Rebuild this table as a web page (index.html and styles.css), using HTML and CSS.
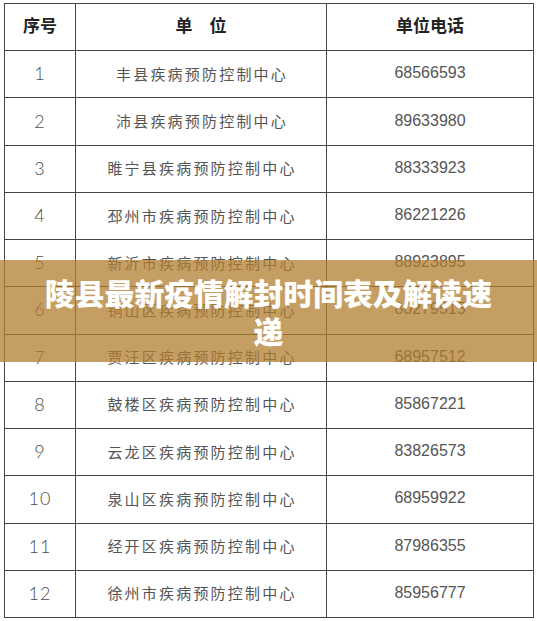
FILE: index.html
```html
<!DOCTYPE html>
<html lang="zh-CN">
<head>
<meta charset="utf-8">
<title>陵县最新疫情解封时间表及解读速递</title>
<link rel="stylesheet" href="styles.css">
</head>
<body>
<div class="page">
  <div class="table">
    <div class="cell head">序号</div>
    <div class="cell head">单　位</div>
    <div class="cell head">单位电话</div>

    <div class="cell num">1</div><div class="cell name">丰县疾病预防控制中心</div><div class="cell tel">68566593</div>
    <div class="cell num">2</div><div class="cell name">沛县疾病预防控制中心</div><div class="cell tel">89633980</div>
    <div class="cell num">3</div><div class="cell name">睢宁县疾病预防控制中心</div><div class="cell tel">88333923</div>
    <div class="cell num">4</div><div class="cell name">邳州市疾病预防控制中心</div><div class="cell tel">86221226</div>
    <div class="cell num">5</div><div class="cell name">新沂市疾病预防控制中心</div><div class="cell tel">88923895</div>
    <div class="cell num">6</div><div class="cell name">铜山区疾病预防控制中心</div><div class="cell tel">80279515</div>
    <div class="cell num">7</div><div class="cell name">贾汪区疾病预防控制中心</div><div class="cell tel">68957512</div>
    <div class="cell num">8</div><div class="cell name">鼓楼区疾病预防控制中心</div><div class="cell tel">85867221</div>
    <div class="cell num">9</div><div class="cell name">云龙区疾病预防控制中心</div><div class="cell tel">83826573</div>
    <div class="cell num">10</div><div class="cell name">泉山区疾病预防控制中心</div><div class="cell tel">68959922</div>
    <div class="cell num">11</div><div class="cell name">经开区疾病预防控制中心</div><div class="cell tel">87986355</div>
    <div class="cell num">12</div><div class="cell name">徐州市疾病预防控制中心</div><div class="cell tel">85956777</div>
  </div>
  <div class="banner">
    <h1 class="title">陵县最新疫情解封时间表及解读速递</h1>
  </div>
</div>
</body>
</html>
```

FILE: styles.css
```css
html, body {
  margin: 0;
  padding: 0;
  background: #ffffff;
}

.page {
  position: relative;
  width: 537px;
  height: 621px;
  padding: 3px 0 0 4px;
  box-sizing: border-box;
}

.table {
  display: grid;
  grid-template-columns: 70px 250px 206px;
  grid-template-rows: repeat(13, 1fr);
  gap: 1px;
  width: 530px;
  height: 615px;
  box-sizing: border-box;
  border: 1px solid #444444;
  background: #444444;
}

.cell {
  background: #ffffff;
  display: flex;
  align-items: center;
  justify-content: center;
  color: #555555;
  padding-bottom: 2px;
}

.head {
  font-family: "Noto Sans CJK SC", sans-serif;
  font-weight: 700;
  font-size: 17px;
  color: #222222;
  padding-bottom: 5px;
}

.num {
  font-family: "Lato", "Liberation Sans", sans-serif;
  font-weight: 300;
  font-size: 18px;
  letter-spacing: 1px;
  color: #4d4d4d;
}

.name {
  font-family: "Noto Sans CJK SC", sans-serif;
  font-size: 15px;
  letter-spacing: 2.2px;
  color: #555555;
  padding-left: 2px;
}

.tel {
  font-family: "Liberation Sans", sans-serif;
  font-size: 16px;
  color: #555555;
}

.banner {
  position: absolute;
  left: 0;
  right: 0;
  top: 260px;
  height: 102px;
  background: rgba(178, 126, 48, 0.75);
  display: flex;
  align-items: center;
  justify-content: center;
  padding: 0 36px;
  box-sizing: border-box;
}

.title {
  margin: 0;
  font-family: "Noto Sans CJK SC", sans-serif;
  font-weight: 900;
  font-size: 29.8px;
  line-height: 38px;
  color: #ffffff;
  text-align: center;
}
```
